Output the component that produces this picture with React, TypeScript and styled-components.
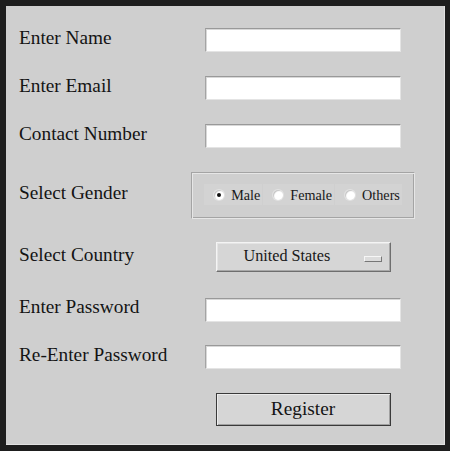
import React from "react";
import styled, { createGlobalStyle } from "styled-components";

const Global = createGlobalStyle`
  html, body { margin: 0; padding: 0; background: #1c1c1c; }
  * { box-sizing: border-box; }
`;

const Window = styled.div`
  width: 450px;
  height: 451px;
  background: #1e1e1e;
  padding: 6px 5px 6px 6px;
  font-family: "Liberation Serif", "Times New Roman", serif;
  color: #141414;
`;

const Panel = styled.div`
  width: 439px;
  height: 439px;
  background: #cfcfcf;
  border-right: 1px solid #e2e2e2;
  border-bottom: 1px solid #e2e2e2;
  padding: 10px 0 0 13px;
  display: grid;
  grid-template-columns: 173px 222px;
  grid-template-rows: 48px 48px 48px 70px 54px 51px 44px 61px;
  align-items: center;
`;

const Label = styled.div`
  font-size: 19.3px;
  line-height: 19px;
  padding-bottom: 6px;
  white-space: nowrap;
`;

const Entry = styled.input`
  justify-self: center;
  width: 196px;
  height: 24px;
  margin: 0;
  padding: 0 4px;
  background: #ffffff;
  border: 1px solid;
  border-color: #999 #e4e4e4 #e4e4e4 #a4a4a4;
  box-shadow: inset 1px 1px 0 #d8d8d8;
  outline: none;
  font-family: inherit;
  font-size: 15px;
`;

const GenderFrame = styled.div`
  justify-self: center;
  width: 224px;
  height: 47px;
  border: 1px solid #a4a4a4;
  border-right-color: #e6e6e6;
  border-bottom-color: #e6e6e6;
  box-shadow: inset 1px 1px 0 #e6e6e6, inset -1px -1px 0 #a4a4a4;
  display: flex;
  align-items: center;
  justify-content: center;
`;

const RadioGroup = styled.div`
  display: flex;
  gap: 1px;
  margin-top: -1px;
`;

const RadioOption = styled.label`
  display: flex;
  align-items: center;
  height: 21px;
  padding: 0 2px 0 10px;
  background: #d3d3d3;
  font-size: 14.2px;
  line-height: 14px;
  color: #181818;
  cursor: default;
`;

const RadioCircle = styled.span<{ $checked?: boolean }>`
  position: relative;
  width: 10px;
  height: 10px;
  border-radius: 50%;
  background: #ffffff;
  box-shadow: 0 0 0 1px #e2e2e2, inset 1px 1px 1px #c4c4c4;
  margin-right: 7px;
  margin-top: 1px;
  &::after {
    content: "";
    display: ${(p) => (p.$checked ? "block" : "none")};
    position: absolute;
    left: 3px;
    top: 3px;
    width: 4px;
    height: 4px;
    border-radius: 50%;
    background: #111;
  }
`;

const OptionMenu = styled.div`
  justify-self: center;
  width: 175px;
  height: 30px;
  display: flex;
  align-items: center;
  padding: 0 8px 0 27px;
  background: #d6d6d6;
  border: 1px solid;
  border-color: #f4f4f4 #6e6e6e #6e6e6e #f4f4f4;
  box-shadow: inset -1px -1px 0 #a8a8a8, inset 1px 1px 0 #e4e4e4;
  font-size: 16.2px;
  line-height: 16px;
  color: #181818;
`;

const MenuText = styled.span`
  padding-bottom: 2px;
`;

const MenuIndicator = styled.span`
  margin-left: auto;
  width: 18px;
  height: 6px;
  background: #dcdcdc;
  border: 1px solid;
  border-color: #f6f6f6 #777 #777 #f6f6f6;
  margin-top: 3px;
`;

const RegisterButton = styled.button`
  grid-column: 2;
  justify-self: center;
  width: 175px;
  height: 33px;
  margin: 0;
  padding: 0 0 2px;
  background: #d6d6d6;
  border: 1px solid #3a3a3a;
  box-shadow: inset 1px 1px 0 #ececec, inset -1px -1px 0 #a0a0a0;
  font-family: inherit;
  font-size: 19.3px;
  color: #141414;
`;

export default function App() {
  return (
    <>
      <Global />
      <Window>
        <Panel>
          <Label>Enter Name</Label>
          <Entry />
          <Label>Enter Email</Label>
          <Entry />
          <Label>Contact Number</Label>
          <Entry />
          <Label>Select Gender</Label>
          <GenderFrame>
            <RadioGroup>
              <RadioOption>
                <RadioCircle $checked />
                Male
              </RadioOption>
              <RadioOption>
                <RadioCircle />
                Female
              </RadioOption>
              <RadioOption>
                <RadioCircle />
                Others
              </RadioOption>
            </RadioGroup>
          </GenderFrame>
          <Label>Select Country</Label>
          <OptionMenu>
            <MenuText>United States</MenuText>
            <MenuIndicator />
          </OptionMenu>
          <Label>Enter Password</Label>
          <Entry type="password" />
          <Label>Re-Enter Password</Label>
          <Entry type="password" />
          <RegisterButton>Register</RegisterButton>
        </Panel>
      </Window>
    </>
  );
}
